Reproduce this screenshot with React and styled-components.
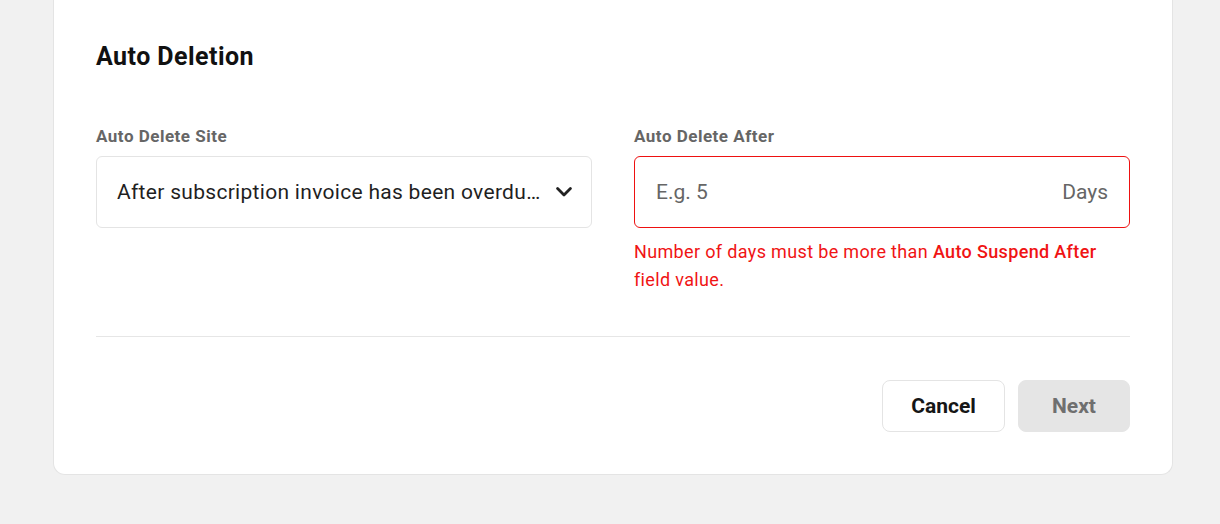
import React, { useState } from "react";
import styled, { createGlobalStyle } from "styled-components";

// =================== Global ===================
const GlobalStyle = createGlobalStyle`
  * {
    box-sizing: border-box;
  }
  body {
    margin: 0;
    background: #f1f1f1;
    font-family: Roboto, "Liberation Sans", Arial, sans-serif;
  }
`;

// =================== Styled Components ===================
const Page = styled.div`
  padding: 0 47px 49px 53px;
`;

const Card = styled.section`
  background: #ffffff;
  border: 1px solid #e4e4e4;
  border-top: none;
  border-radius: 0 0 12px 12px;
  padding: 43px 42px 42px;
`;

const Title = styled.h2`
  margin: 0;
  font-size: 25px;
  line-height: 28px;
  font-weight: 700;
  letter-spacing: 0.45px;
  color: #111111;
`;

const FieldsRow = styled.div`
  display: grid;
  grid-template-columns: minmax(0, 1fr) minmax(0, 1fr);
  gap: 42px;
  margin-top: 55px;
  align-items: start;
`;

const Field = styled.div`
  display: flex;
  flex-direction: column;
  min-width: 0;
`;

const Label = styled.label`
  font-size: 17px;
  line-height: 20px;
  font-weight: 700;
  letter-spacing: 0.5px;
  color: #666666;
  margin-bottom: 10px;
`;

const Control = styled.div`
  display: flex;
  align-items: center;
  height: 72px;
  padding: 0 19px 0 20px;
  border: 1px solid ${(p) => (p.$error ? "#ee1111" : "#e4e4e4")};
  border-radius: 6px;
  background: #ffffff;
  font-size: 21px;
  color: #1f1f1f;
  cursor: ${(p) => (p.$clickable ? "pointer" : "text")};
`;

const SelectText = styled.span`
  flex: 1;
  min-width: 0;
  white-space: nowrap;
  overflow: hidden;
  text-overflow: ellipsis;
  letter-spacing: 0.3px;
  margin-right: 10px;
`;

const Input = styled.input`
  flex: 1;
  min-width: 0;
  border: none;
  outline: none;
  font: inherit;
  color: #1f1f1f;
  padding: 0;
  margin-left: 1px;

  &::placeholder {
    color: #666666;
  }
`;

const Suffix = styled.span`
  color: #666666;
  margin-right: 2px;
`;

const ErrorText = styled.p`
  margin: 10px 0 0;
  font-size: 18px;
  line-height: 28px;
  letter-spacing: 0.35px;
  color: #f01414;

  strong {
    font-weight: 500;
  }
`;

const Divider = styled.hr`
  border: none;
  border-top: 1px solid #e6e6e6;
  margin: 42px 0 43px;
`;

const Actions = styled.div`
  display: flex;
  justify-content: flex-end;
  gap: 13px;
`;

const Button = styled.button`
  height: 52px;
  padding: 0;
  border-radius: 8px;
  font-family: inherit;
  font-size: 21px;
  font-weight: 700;
  cursor: pointer;

  &.secondary {
    width: 123px;
    background: #ffffff;
    border: 1px solid #e4e4e4;
    color: #161616;
  }

  &.primary {
    width: 112px;
    background: #e5e5e5;
    border: 1px solid #e5e5e5;
    color: #6f6f6f;
    cursor: not-allowed;
  }
`;

const Chevron = () => (
  <svg width="16" height="10" viewBox="0 0 16 10" fill="none">
    <path
      d="M1.6 1.6L8 8L14.4 1.6"
      stroke="#222"
      strokeWidth="2.8"
      strokeLinecap="round"
      strokeLinejoin="round"
    />
  </svg>
);

// ====================== Component ======================
const App = () => {
  const [days, setDays] = useState("");

  return (
    <>
      <GlobalStyle />
      <Page>
        <Card>
          <Title>Auto Deletion</Title>

          <FieldsRow>
            <Field>
              <Label>Auto Delete Site</Label>
              <Control $clickable>
                <SelectText>
                  After subscription invoice has been overdue for
                </SelectText>
                <Chevron />
              </Control>
            </Field>

            <Field>
              <Label>Auto Delete After</Label>
              <Control $error>
                <Input
                  placeholder="E.g. 5"
                  value={days}
                  onChange={(e) => setDays(e.target.value)}
                />
                <Suffix>Days</Suffix>
              </Control>
              <ErrorText>
                Number of days must be more than{" "}
                <strong>Auto Suspend After</strong> field value.
              </ErrorText>
            </Field>
          </FieldsRow>

          <Divider />

          <Actions>
            <Button className="secondary">Cancel</Button>
            <Button className="primary" disabled>
              Next
            </Button>
          </Actions>
        </Card>
      </Page>
    </>
  );
};

export default App;
